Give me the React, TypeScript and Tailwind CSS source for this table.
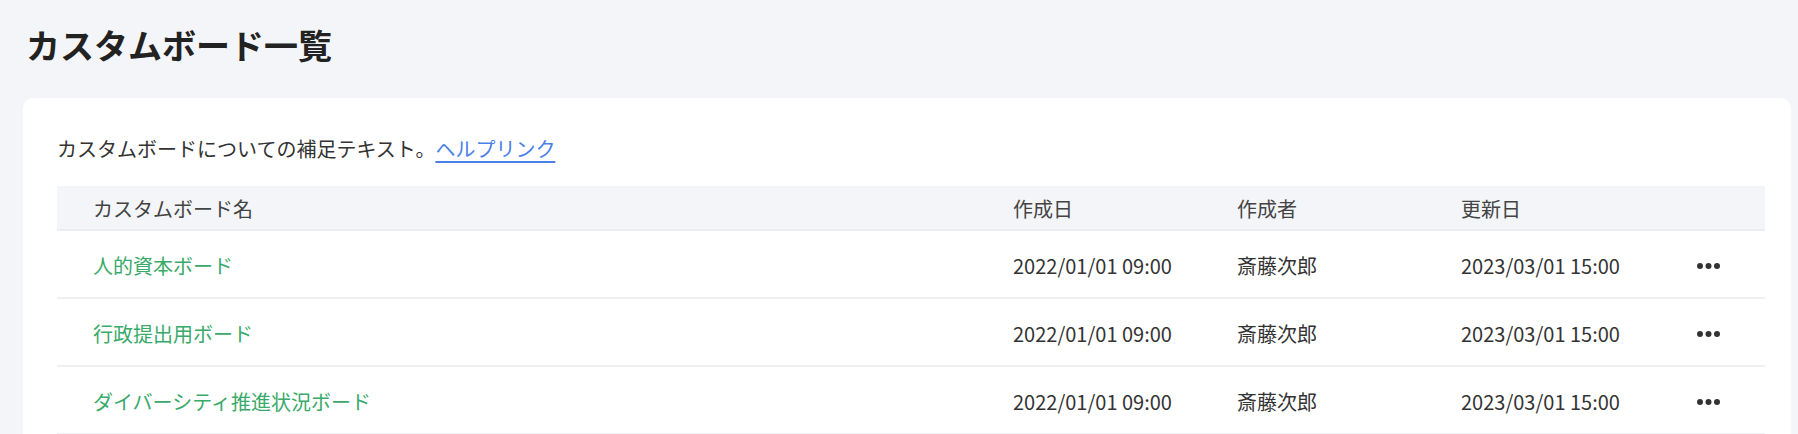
import React from 'react';

interface Board {
  name: string;
  createdAt: string;
  createdBy: string;
  updatedAt: string;
}

const boards: Board[] = [
  { name: '人的資本ボード', createdAt: '2022/01/01 09:00', createdBy: '斎藤次郎', updatedAt: '2023/03/01 15:00' },
  { name: '行政提出用ボード', createdAt: '2022/01/01 09:00', createdBy: '斎藤次郎', updatedAt: '2023/03/01 15:00' },
  { name: 'ダイバーシティ推進状況ボード', createdAt: '2022/01/01 09:00', createdBy: '斎藤次郎', updatedAt: '2023/03/01 15:00' },
];

const cols = 'grid grid-cols-[920px_224px_224px_235px_25px] items-center pl-[36px]';

const MoreIcon: React.FC = () => (
  <svg width="25" height="8" viewBox="0 0 25 8" className="text-[#333]">
    <circle cx="4" cy="4" r="3" fill="currentColor" />
    <circle cx="12.5" cy="4" r="3" fill="currentColor" />
    <circle cx="21" cy="4" r="3" fill="currentColor" />
  </svg>
);

const App: React.FC = () => {
  return (
    <div
      className="min-h-[434px] bg-[#f4f5f8] pt-[20px] text-[#333]"
      style={{ fontFamily: '"Noto Sans CJK JP", "Noto Sans", sans-serif' }}
    >
      <h1 className="ml-[26px] h-[50px] text-[34px] font-bold leading-[50px] text-[#222]">
        カスタムボード一覧
      </h1>

      <div className="ml-[23px] mt-[28px] w-[1768px] rounded-[10px] bg-white pl-[34px] pr-[26px] pt-[36px] pb-[40px]">
        <p className="text-[20px] leading-[30px] text-[#333]">
          カスタムボードについての補足テキスト。
          <a href="#" className="text-[#4a80e8] underline decoration-[1.5px] underline-offset-[4px]">
            ヘルプリンク
          </a>
        </p>

        <div className="mt-[22px] w-[1708px]">
          <div className={`${cols} h-[45px] border-b-2 border-[#ebedf0] bg-[#f4f5f8] pt-[3px] text-[20px] text-[#444]`}>
            <span>カスタムボード名</span>
            <span>作成日</span>
            <span>作成者</span>
            <span>更新日</span>
            <span />
          </div>
          {boards.map((b) => (
            <div key={b.name} className={`${cols} h-[68px] border-b-2 border-[#eef0f2] pt-[4px] text-[20px]`}>
              <span className="text-[#3aaa6a]">{b.name}</span>
              <span>{b.createdAt}</span>
              <span>{b.createdBy}</span>
              <span>{b.updatedAt}</span>
              <span className="flex justify-center">
                <MoreIcon />
              </span>
            </div>
          ))}
        </div>
      </div>
    </div>
  );
};

export default App;
